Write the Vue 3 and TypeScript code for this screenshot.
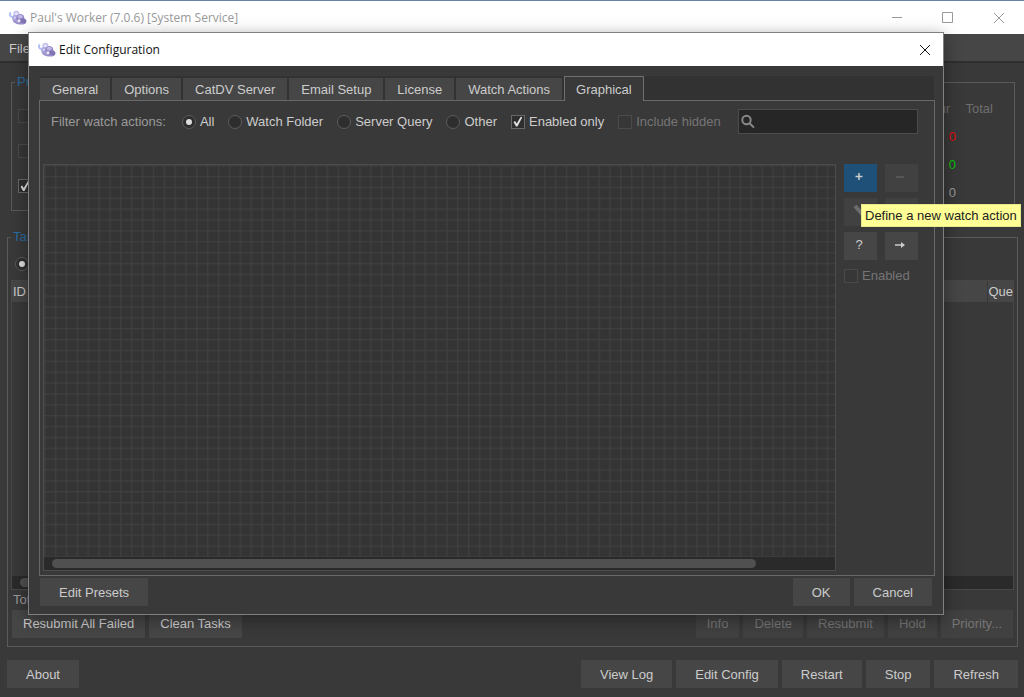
<script setup lang="ts">
import { ref } from 'vue'

const tabs = ['General', 'Options', 'CatDV Server', 'Email Setup', 'License', 'Watch Actions', 'Graphical']
const activeTab = ref('Graphical')

const sources = ['All', 'Watch Folder', 'Server Query', 'Other']
const source = ref('All')
const enabledOnly = ref(true)
const search = ref('')

const taskActions = ['Info', 'Delete', 'Resubmit', 'Hold', 'Priority...']
const footerActions = ['View Log', 'Edit Config', 'Restart', 'Stop', 'Refresh']
const stats = [
  { name: 'failed', count: 0 },
  { name: 'done', count: 0 },
  { name: 'pending', count: 0 },
]
</script>

<template>
  <div class="desktop">
    <svg class="defs" width="0" height="0" aria-hidden="true">
      <symbol id="app-icon" viewBox="0 0 18 16">
        <path d="M2 2.600a2.300 2.300 0 0 0 .8 4.200c1.200.4 2.400-.4 2.600-1.600" fill="none" stroke="#b3c0f2" stroke-width="2" />
        <circle cx="7.400" cy="3.800" r="2.300" fill="#e6e5fa" stroke="#c3c0ec" stroke-width="1.500" />
        <ellipse cx="6.800" cy="8.600" rx="3.600" ry="3.400" fill="#aaa2dc" />
        <ellipse cx="11.400" cy="8.600" rx="4" ry="4.600" fill="#9288c4" />
        <ellipse cx="14" cy="11.200" rx="3.400" ry="2.800" fill="#8274b4" />
        <ellipse cx="11.200" cy="6.600" rx="2.400" ry="1.900" fill="#c3b8e8" />
        <path d="M4.600 11c2.600 2.400 6 3 10.200 2.600" fill="none" stroke="#9a90cc" stroke-width="1.800" />
        <circle cx="10" cy="10.800" r="1.500" fill="#ece8fa" />
        <circle cx="5.800" cy="7.600" r="1.200" fill="#d6d2f4" />
      </symbol>
    </svg>

    <header class="titlebar main-title">
      <svg class="logo" aria-hidden="true"><use href="#app-icon" /></svg>
      <span class="caption">Paul's Worker (7.0.6) [System Service]</span>
      <div class="window-controls">
        <button aria-label="Minimize"><svg viewBox="0 0 12 12"><path d="M1 5.500h10" /></svg></button>
        <button aria-label="Maximize"><svg viewBox="0 0 12 12"><path d="M.5.5h10v10H.5z" /></svg></button>
        <button aria-label="Close"><svg viewBox="0 0 12 12"><path d="M1 1l10 10M11 1L1 11" /></svg></button>
      </div>
    </header>
    <nav class="menubar"><button>File</button></nav>

    <main class="workspace">
      <section class="group processing" aria-labelledby="prefs-title">
        <h2 id="prefs-title" class="legend">Prefs</h2>
        <div class="processing-row">
          <div class="switches">
            <input type="checkbox" class="box" aria-label="Offline" disabled />
            <input type="checkbox" class="box" aria-label="Paused" disabled />
            <input type="checkbox" class="box" aria-label="Running" checked />
          </div>
          <table class="stats">
            <thead>
              <tr><th>Hour</th><th>Total</th></tr>
            </thead>
            <tbody>
              <tr v-for="row in stats" :key="row.name" :class="row.name"><td>{{ row.count }}</td><td></td></tr>
            </tbody>
          </table>
        </div>
      </section>

      <section class="group tasks" aria-labelledby="tasks-title">
        <h2 id="tasks-title" class="legend">Tasks</h2>
        <label class="option task-filter"><input type="radio" class="dot" name="tasks" checked />All</label>
        <div class="task-list">
          <table>
            <thead><tr><th>ID</th><th class="queue">Que</th></tr></thead>
          </table>
          <div class="scrollbar"><span class="thumb short"></span></div>
        </div>
        <p class="total">Total</p>
        <div class="button-row">
          <button class="btn tight">Resubmit All Failed</button>
          <button class="btn tight">Clean Tasks</button>
          <span class="spacer"></span>
          <button v-for="name in taskActions" :key="name" class="btn tight" disabled>{{ name }}</button>
        </div>
      </section>

      <footer class="button-row footer">
        <button class="btn">About</button>
        <span class="spacer"></span>
        <button v-for="name in footerActions" :key="name" class="btn">{{ name }}</button>
      </footer>
    </main>

    <section class="dialog" role="dialog" aria-label="Edit Configuration">
      <header class="titlebar">
        <svg class="logo" aria-hidden="true"><use href="#app-icon" /></svg>
        <span class="caption">Edit Configuration</span>
        <button class="dialog-close" aria-label="Close"><svg viewBox="0 0 12 12"><path d="M1 1l10 10M11 1L1 11" /></svg></button>
      </header>
      <div class="dialog-body">
        <div class="tabs" role="tablist">
          <button
            v-for="tab in tabs"
            :key="tab"
            role="tab"
            :aria-selected="tab === activeTab"
            :class="['tab', { active: tab === activeTab }]"
            @click="activeTab = tab"
          >{{ tab }}</button>
        </div>
        <div class="pane">
          <div class="filters">
            <span class="muted">Filter watch actions:</span>
            <label v-for="item in sources" :key="item" class="option">
              <input v-model="source" type="radio" class="dot" name="source" :value="item" />{{ item }}
            </label>
            <label class="option"><input v-model="enabledOnly" type="checkbox" class="box" />Enabled only</label>
            <label class="option off"><input type="checkbox" class="box" disabled />Include hidden</label>
            <div class="search">
              <svg viewBox="0 0 16 16" aria-hidden="true"><circle cx="6.500" cy="6" r="4.200" /><path d="M9.600 9.200l4.400 4.400" /></svg>
              <input v-model="search" type="text" aria-label="Search watch actions" />
            </div>
          </div>
          <div class="editor">
            <div class="canvas">
              <svg class="grid" aria-hidden="true">
                <defs>
                  <pattern id="cells" width="10.870" height="10.870" patternUnits="userSpaceOnUse">
                    <path d="M0.800 0v10.870M0 0.800h10.870" stroke="#424242" stroke-width="1" />
                  </pattern>
                </defs>
                <rect width="100%" height="100%" fill="url(#cells)" />
              </svg>
              <div class="scrollbar"><span class="thumb"></span></div>
            </div>
            <aside class="tools">
              <div class="tool-grid">
                <button class="tool primary" aria-label="Add" aria-describedby="add-tip"><svg viewBox="0 0 12 12"><path d="M6 2v7M2.500 5.500h7" stroke-width="1.500" /></svg></button>
                <button class="tool" aria-label="Remove" disabled><svg viewBox="0 0 12 12"><path d="M2 6h8" /></svg></button>
                <button class="tool" aria-label="Edit" disabled><svg viewBox="0 0 12 12"><path d="M2 1l8 9" stroke-width="4" /></svg></button>
                <button class="tool" aria-label="Duplicate" disabled></button>
                <button class="tool" aria-label="Help">?</button>
                <button class="tool" aria-label="Next"><svg viewBox="0 0 12 12"><path d="M1 6h7" stroke-width="1.500" /><path d="M7 3l4 3-4 3z" class="solid" /></svg></button>
              </div>
              <label class="option off"><input type="checkbox" class="box" disabled />Enabled</label>
              <div id="add-tip" class="tooltip" role="tooltip">Define a new watch action</div>
            </aside>
          </div>
        </div>
        <div class="button-row dialog-actions">
          <button class="btn">Edit Presets</button>
          <span class="spacer"></span>
          <button class="btn">OK</button>
          <button class="btn">Cancel</button>
        </div>
      </div>
    </section>
  </div>
</template>

<style>
body {
  margin: 0;
  background: #393939;
}
</style>

<style scoped>
* {
  box-sizing: border-box;
}
.desktop {
  position: relative;
  display: flex;
  flex-direction: column;
  min-height: 100vh;
  overflow: hidden;
  background: #393939;
  color: #ccc;
  font: 13px/16px "Liberation Sans", Arial, sans-serif;
}
.defs {
  position: absolute;
}
button,
input {
  font: inherit;
  color: inherit;
  margin: 0;
}
button {
  border: 0;
  padding: 0;
  background: none;
}
.titlebar {
  display: flex;
  align-items: center;
  height: 33px;
  padding-left: 9px;
  gap: 3px;
  background: #fff;
  color: #111;
  font: 12px/16px "Open Sans", "Noto Sans", sans-serif;
}
.main-title {
  height: 34px;
  border-top: 1px solid #6683a6;
  color: #999;
}
.logo {
  width: 18px;
  height: 16px;
}
.caption {
  flex: 1;
}
.window-controls {
  display: flex;
}
.window-controls button {
  width: 51px;
  height: 32px;
}
.window-controls svg,
.dialog-close svg {
  display: block;
  width: 12px;
  height: 12px;
  margin: auto;
  fill: none;
  stroke: #999;
}
.dialog-close {
  width: 37px;
  height: 32px;
}
.dialog-close svg {
  stroke: #111;
}
.menubar {
  height: 29px;
  padding: 7px 9px 4px;
  background: #464646;
  border-bottom: 2px solid #2e2e2e;
}
.workspace {
  flex: 1;
  display: flex;
  flex-direction: column;
  padding: 19px 6px 9px 7px;
}
.group {
  border: 1px solid #5a5a5a;
}
.legend {
  align-self: flex-start;
  width: max-content;
  height: 16px;
  margin: -9px 0 0;
  padding: 0 2px;
  background: #393939;
  color: #2a6b9f;
  font: inherit;
}
.processing {
  margin: 0 3px 26px 4px;
  padding: 0 21px 3px 6px;
}
.processing .legend {
  margin-left: -3px;
}
.processing-row {
  display: flex;
  justify-content: space-between;
  align-items: center;
  padding-top: 5px;
}
.switches {
  display: flex;
  flex-direction: column;
  gap: 21px;
}
.stats {
  border-collapse: collapse;
  color: #999;
}
.stats th,
.stats td {
  height: 28px;
  padding: 0;
  text-align: right;
  font-weight: normal;
}
.stats th {
  color: #6e6e6e;
}
.stats th:first-child {
  padding-right: 6px;
}
.stats th:last-child {
  width: 37px;
}
.stats .failed {
  color: #e00c0c;
}
.stats .done {
  color: #0cc00c;
}
.tasks {
  flex: 1;
  display: flex;
  flex-direction: column;
  padding: 0 3px 8px 3px;
}
.task-filter {
  height: 22px;
  margin-top: 8px;
  padding-left: 4px;
}
.task-list {
  flex: 1;
  display: flex;
  flex-direction: column;
  justify-content: space-between;
  margin-top: 5px;
  border: 1px solid #484848;
}
.task-list table {
  width: 100%;
  border-collapse: collapse;
  table-layout: fixed;
}
.task-list th {
  height: 21px;
  padding: 1px 1px 0;
  background: #464646;
  font-weight: normal;
  text-align: left;
}
.task-list .queue {
  width: 26px;
  border-left: 1px solid #383838;
}
.total {
  margin: 0;
  padding: 2px;
  height: 20px;
  color: #999;
}
.button-row {
  display: flex;
  gap: 4px;
}
.tasks .button-row {
  padding: 0 1px;
}
.footer {
  margin-top: 13px;
}
.spacer {
  flex: 1;
}
.btn {
  height: 28px;
  padding: 1px 19px 0;
  background: #464646;
  white-space: nowrap;
}
.btn.tight {
  padding: 0 11px;
}
.btn:disabled {
  background: #414141;
  color: #757575;
}
.option {
  display: flex;
  align-items: center;
  gap: 4px;
  white-space: nowrap;
}
.off {
  color: #757575;
}
.muted {
  margin-right: 2px;
  color: #999;
}
.dot,
.box {
  appearance: none;
  flex: none;
  display: grid;
  place-items: center;
  width: 14px;
  height: 14px;
  border: 1px solid #5c5c5c;
  background: #2e2e2e;
}
.dot {
  border-radius: 50%;
}
.dot:checked::after {
  content: "";
  width: 6px;
  height: 6px;
  border-radius: 50%;
  background: #ddd;
}
.box:checked {
  border-color: #686868;
}
.box:checked::after {
  content: "";
  width: 9px;
  height: 10px;
  background: #ddd;
  clip-path: polygon(0 54%, 18% 44%, 36% 70%, 82% 0, 100% 6%, 44% 100%, 28% 100%);
}
.box:disabled {
  border-color: #4a4a4a;
  background: #373737;
}
.dialog {
  position: absolute;
  top: 32px;
  right: 80px;
  bottom: 82px;
  left: 28px;
  display: flex;
  flex-direction: column;
  border: 1px solid #808080;
  background: #393939;
  box-shadow: 0 4px 16px rgba(0, 0, 0, 0.4);
}
.dialog-body {
  flex: 1;
  display: flex;
  flex-direction: column;
  padding: 10px 8px 8px 10px;
}
.tabs {
  display: flex;
  align-items: flex-end;
  gap: 2px;
  height: 24px;
  margin: 0 1px;
  background: #323232;
}
.tab {
  height: 22px;
  padding: 1px 12px 0;
  background: #464646;
  white-space: nowrap;
}
.tab.active {
  height: 25px;
  margin-bottom: -1px;
  padding: 1px 11px 0;
  border: 1px solid #707070;
  border-bottom: 0;
  background: #393939;
  z-index: 1;
}
.pane {
  flex: 1;
  display: flex;
  flex-direction: column;
  border: 1px solid #686868;
}
.filters {
  display: flex;
  align-items: center;
  gap: 14px;
  padding: 8px 16px 0 11px;
}
.search {
  flex: none;
  display: flex;
  align-items: center;
  width: 180px;
  height: 25px;
  margin-left: auto;
  padding-left: 1px;
  border: 1px solid #4c4c4c;
  background: #262626;
}
.search svg {
  width: 16px;
  height: 16px;
  fill: none;
  stroke: #888;
  stroke-width: 2;
  flex: none;
}
.search input {
  flex: 1;
  min-width: 0;
  border: 0;
  background: none;
  outline: 0;
}
.editor {
  flex: 1;
  display: flex;
  gap: 8px;
  padding: 30px 16px 4px 3px;
}
.canvas {
  flex: 1;
  display: flex;
  flex-direction: column;
  border: 1px solid #4c4c4c;
  background: #343434;
}
.grid {
  flex: 1;
  width: 100%;
  min-height: 0;
}
.scrollbar {
  height: 13px;
  padding: 2px 79px 2px 8px;
  background: #2a2a2a;
}
.thumb {
  display: block;
  height: 9px;
  border-radius: 5px;
  background: #505050;
}
.thumb.short {
  width: 70%;
}
.tools {
  position: relative;
  flex: none;
}
.tool-grid {
  display: grid;
  grid-template-columns: 33px 33px;
  gap: 6px 8px;
  margin-bottom: 8px;
}
.tool {
  width: 33px;
  height: 28px;
  padding: 0 3px 2px 0;
  background: #464646;
}
.tool.primary {
  background: #1f5078;
}
.tool:disabled {
  background: #414141;
}
.tool svg {
  display: block;
  width: 12px;
  height: 12px;
  margin: auto;
  fill: none;
  stroke: #ccc;
}
.tool:disabled svg {
  stroke: #6c6c6c;
}
.tool .solid {
  fill: #ccc;
  stroke: none;
}
.tooltip {
  position: absolute;
  top: 40px;
  left: 17px;
  z-index: 2;
  padding: 2px 3px;
  border: 1px solid #e8e88c;
  background: #ffff96;
  color: #222;
  line-height: 17px;
  white-space: nowrap;
}
.dialog-actions {
  margin: 2px 3px 0 1px;
}
</style>
